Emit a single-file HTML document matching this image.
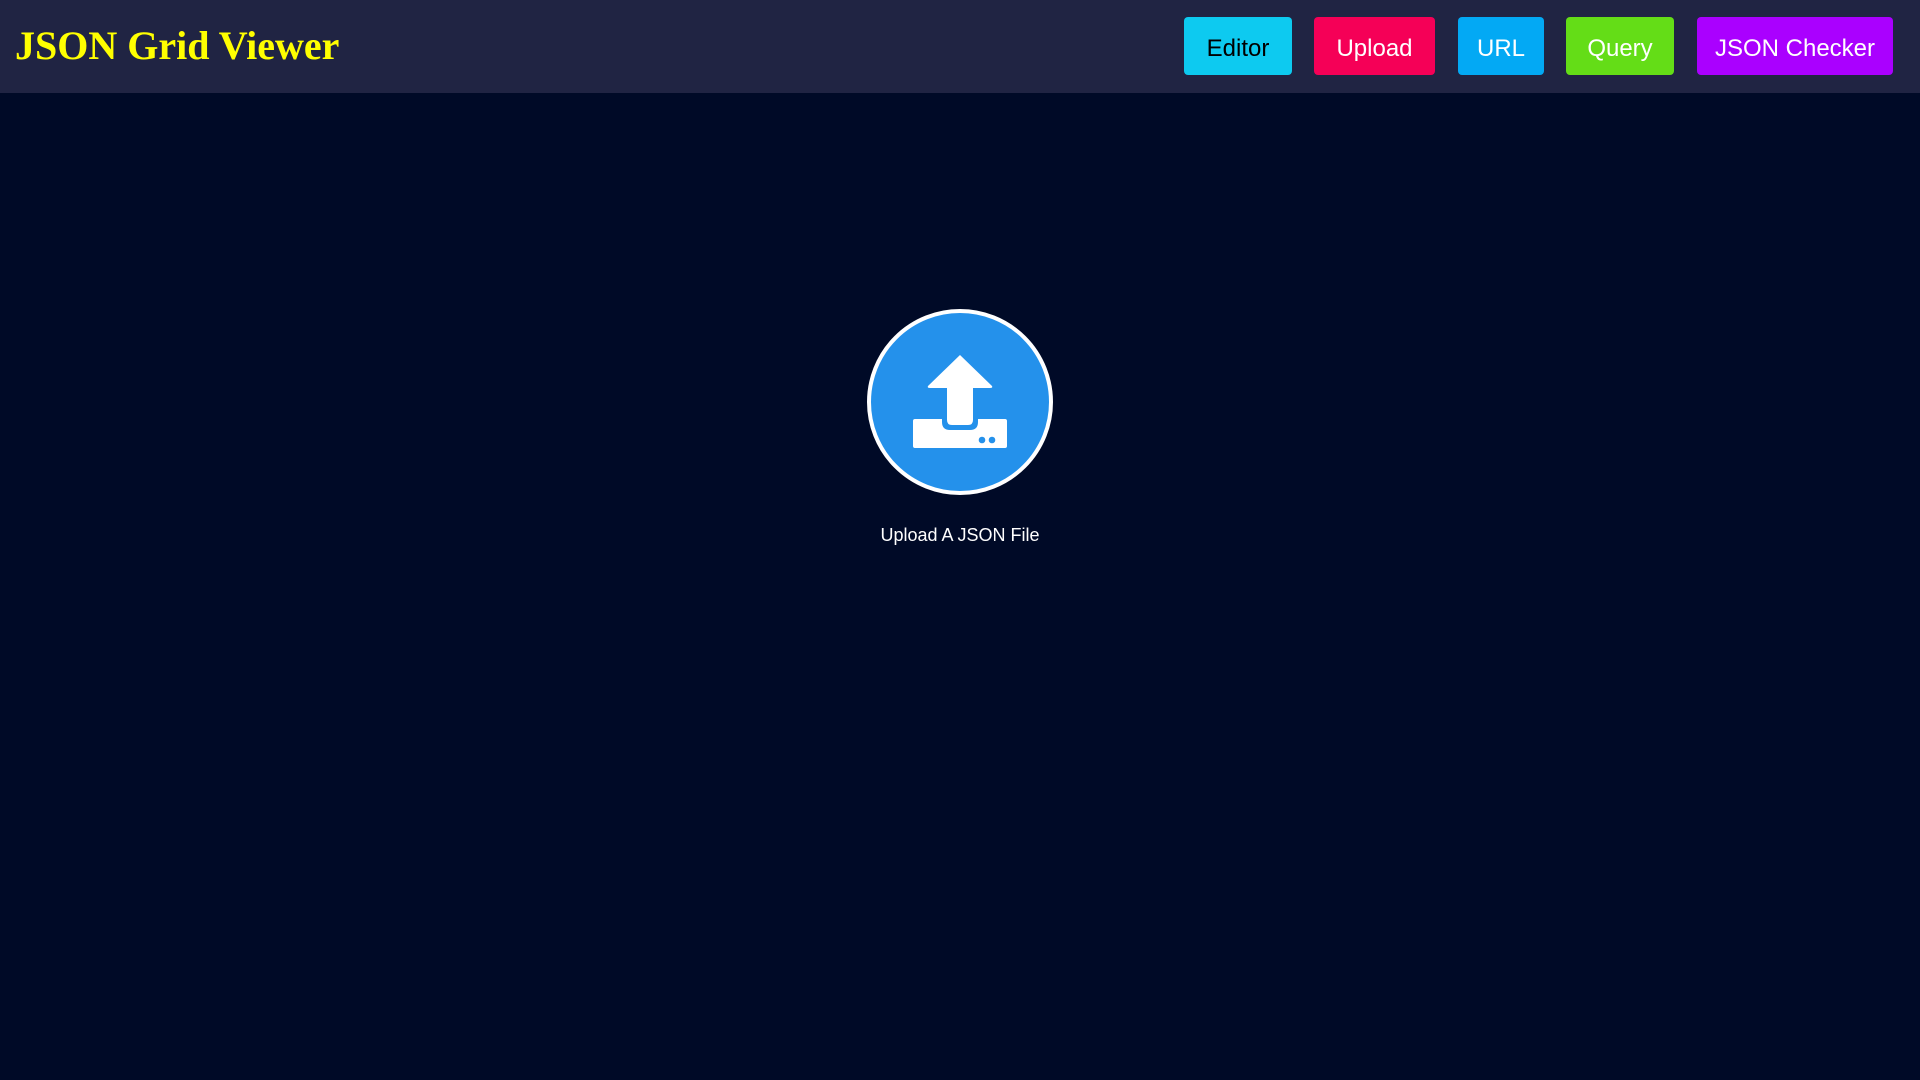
<!DOCTYPE html>
<html><head><meta charset="utf-8"><style>
html,body{margin:0;padding:0;width:1920px;height:1080px;background:#000a27;overflow:hidden}
.hdr{position:absolute;left:0;top:0;width:1920px;height:93px;background:#202443}
.title{position:absolute;left:15px;top:21px;font:bold 40px "Liberation Serif",serif;color:#ffff00;line-height:50px;white-space:nowrap}
.btn{position:absolute;top:17px;height:58px;border-radius:4px;font:24px "Liberation Sans",sans-serif;color:#fff;display:flex;align-items:center;justify-content:center;padding-top:6px;box-sizing:border-box}
.lbl{position:absolute;left:0;width:1920px;top:525px;text-align:center;font:18px "Liberation Sans",sans-serif;color:#fff}
</style></head><body>
<div class="hdr">
<div class="title">JSON Grid Viewer</div>
<div class="btn" style="left:1184px;width:108px;background:#0dcaf0;color:#000">Editor</div>
<div class="btn" style="left:1314px;width:121px;background:#f50057">Upload</div>
<div class="btn" style="left:1458px;width:86px;background:#03a9f4">URL</div>
<div class="btn" style="left:1566px;width:108px;background:#64dd17">Query</div>
<div class="btn" style="left:1697px;width:196px;background:#aa00ff">JSON Checker</div>
</div>
<svg style="position:absolute;left:840px;top:290px" width="240" height="240" viewBox="0 0 240 240">
<circle cx="120" cy="112" r="91" fill="#2491eb" stroke="#fff" stroke-width="4"/>
<path d="M120 65 L152 96 Q153 98 150 98 L133 98 L133 130 Q133 135 128 135 L112 135 Q107 135 107 130 L107 98 L90 98 Q87 98 88 96 Z" fill="#fff"/>
<path d="M75 129 L102 129 L102 132 Q102 140 110 140 L130 140 Q138 140 138 132 L138 129 L165 129 Q167 129 167 131 L167 156 Q167 158 165 158 L75 158 Q73 158 73 156 L73 131 Q73 129 75 129 Z" fill="#fff"/>
<circle cx="142" cy="150" r="3.3" fill="#2491eb"/><circle cx="152" cy="150" r="3.3" fill="#2491eb"/>
</svg>
<div class="lbl">Upload A JSON File</div>
</body></html>
